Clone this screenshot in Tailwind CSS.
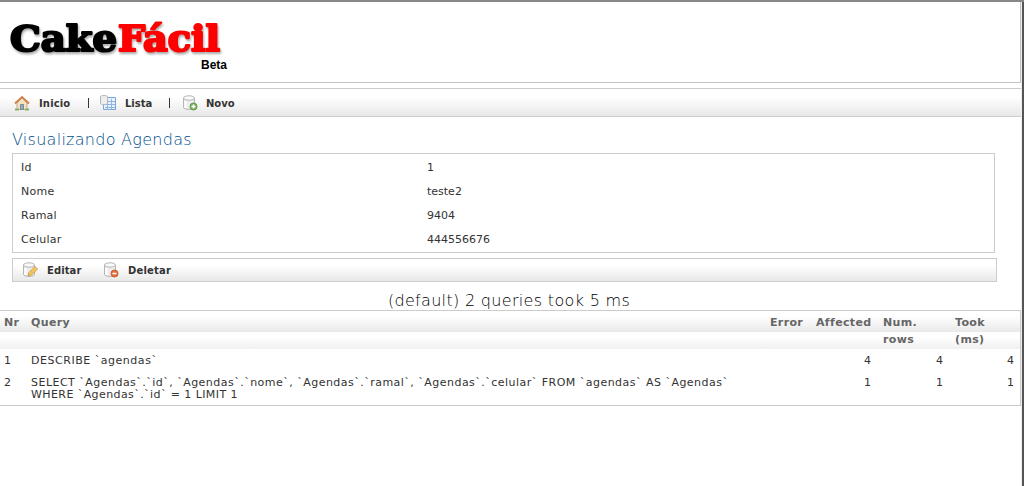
<!DOCTYPE html>
<html lang="pt-br">
<head>
    <meta charset="utf-8">
    <title>CakeFácil</title>
    <script src="https://cdn.jsdelivr.net/npm/@tailwindcss/browser@4"></script>
</head>
<body class="h-[486px] overflow-hidden bg-white font-['DejaVu_Sans',sans-serif] text-[11px] leading-3 text-[#333]">
    <svg class="hidden">
        <symbol id="db" viewBox="0 0 16 16">
            <path d="M1.500 3v9.500c0 2.500 11 2.500 11 0V3" fill="#ededed" stroke="#b5b5b5" />
            <path d="M3.500 6v7" stroke="#fff" stroke-width="2" />
            <ellipse cx="7" cy="3" rx="5.500" ry="2.200" fill="#fafafa" stroke="#b5b5b5" />
        </symbol>
    </svg>

    <div class="flex h-full border-t-2 border-[#888]">
        <main class="w-[1021px] shrink-0">
            <!-- Header -->
            <header class="h-[81px] border-r border-b border-[#c4c4c4] pl-2">
                <svg class="h-[76px] w-[240px]" viewBox="8 2 240 76">
                    <g font-family="DejaVu Serif" font-weight="bold" font-size="35" stroke-width="2.2" stroke-linejoin="round" class="drop-shadow-[1px_2px_1px_#aaa]">
                        <text x="10" y="51" textLength="107" lengthAdjust="spacingAndGlyphs" stroke="#000">Cake</text>
                        <text x="118" y="51" textLength="102" lengthAdjust="spacingAndGlyphs" fill="#f00" stroke="#f00">Fácil</text>
                    </g>
                    <text x="201" y="69" font-family="Liberation Sans" font-weight="bold" font-size="12">Beta</text>
                </svg>
            </header>

            <!-- Menu -->
            <nav class="mt-[5px] flex h-[29px] items-center border-y border-[#ccc] bg-linear-to-b from-white from-30% to-[#e8e8e8] pl-[14px] text-[10px] font-bold">
                <svg class="mr-[9px] size-4" viewBox="0 0 16 16">
                    <path d="M3 8v6.500h10V8L8 3z" fill="#f5e3bd" stroke="#c5a98c" />
                    <path d="M1 8.500 8 2l7 6.500" fill="none" stroke="#cc8550" stroke-width="2" />
                    <path d="M6.500 9.500h3v5h-3z" fill="#9ab" stroke="#789" />
                    <path d="M1 14.500h4M11 14.500h4" stroke="#7fb565" stroke-width="2" />
                </svg>
                <span class="w-[49px] pt-0.5 tracking-[.15px]">Inicio</span>
                <span class="mr-[11px] h-[10px] w-px bg-[#333]"></span>
                <svg class="mr-[9px] size-4" viewBox="0 0 16 16">
                    <path d="M3.500 2.500h12v12h-12z" fill="#e8f2ff" stroke="#7aa5d8" />
                    <path d="M5 6.500h10M5 9.500h10M5 12.500h10M7.500 4v11M11.500 4v11" stroke="#8db4e2" />
                    <path d="M.5 1.500v7c0 1.500 7 1.500 7 0v-7c0-1.300-7-1.300-7 0z" fill="#eee" stroke="#b5b5b5" />
                </svg>
                <span class="w-[44px] pt-0.5">Lista</span>
                <span class="mr-[12px] h-[10px] w-px bg-[#333]"></span>
                <svg class="mr-[8px] size-4" viewBox="0 0 16 16">
                    <use href="#db" />
                    <circle cx="11.500" cy="11.500" r="3.500" fill="#7cb25c" stroke="#5c9848" />
                    <path d="M9.500 11.500h4M11.500 9.500v4" stroke="#fff" stroke-width="1.500" />
                </svg>
                <span class="pt-0.5">Novo</span>
            </nav>

            <!-- Record -->
            <h1 class="mt-[13px] ml-3 text-[16px] leading-5 font-extralight tracking-[.27px] text-[#004d8c]">Visualizando Agendas</h1>
            <dl class="mt-[3px] ml-3 grid h-[100px] w-[983px] grid-cols-[406px_1fr] content-start gap-y-3 border border-[#ccc] px-2 pt-2">
                <dt class="tracking-[.25px]">Id</dt><dd>1</dd>
                <dt class="tracking-[.25px]">Nome</dt><dd>teste2</dd>
                <dt class="tracking-[.25px]">Ramal</dt><dd>9404</dd>
                <dt class="tracking-[.25px]">Celular</dt><dd>444556676</dd>
            </dl>
            <div class="mt-[5px] ml-3 flex h-6 w-[985px] items-center border border-[#ccc] bg-linear-to-b from-white from-30% to-[#e8e8e8] pl-[9px] text-[10px] font-bold">
                <svg class="mr-[9px] size-4" viewBox="0 0 16 16">
                    <use href="#db" />
                    <path d="m6 14 1-3.500 6-6 2.500 2.500-6 6z" fill="#f3c65f" stroke="#d29d45" />
                </svg>
                <span class="w-[56px] pt-0.5 tracking-[.1px]">Editar</span>
                <svg class="mr-[9px] size-4" viewBox="0 0 16 16">
                    <use href="#db" />
                    <circle cx="11.500" cy="11.500" r="3.500" fill="#e0703a" stroke="#c8602f" />
                    <path d="M9.500 11.500h4" stroke="#fff" stroke-width="1.500" />
                </svg>
                <span class="pt-0.5 tracking-[.2px]">Deletar</span>
            </div>

            <!-- SQL log -->
            <div class="mt-[9px] h-[19px] pr-[3px] text-center text-[16px] leading-5 font-extralight tracking-[.32px] text-black">(default) 2 queries took 5 ms</div>
            <section class="h-[96px] border-y border-r border-[#ccc]">
                <div class="grid h-[38px] grid-cols-[27px_739px_46px_67px_72px_1fr] bg-[linear-gradient(#fff_0,#fff_5px,#e9e9e9_21px,#fff_21px,#fff_26px,#f0f0f0_38px)] pt-[3px] pl-1 font-bold leading-[17px] tracking-[.35px] text-[#666]">
                    <span>Nr</span><span>Query</span><span>Error</span><span>Affected</span><span>Num.<br>rows</span><span>Took<br>(ms)</span>
                </div>
                <div class="grid grid-cols-[27px_739px_101px_72px_71px] gap-y-[10px] pt-[6px] pl-1">
                    <span>1</span><span class="tracking-[.53px]">DESCRIBE `agendas`</span><span class="text-right">4</span><span class="text-right">4</span><span class="text-right">4</span>
                    <span>2</span><span class="tracking-[.48px]">SELECT `Agendas`.`id`, `Agendas`.`nome`, `Agendas`.`ramal`, `Agendas`.`celular` FROM `agendas` AS `Agendas`<br><span class="tracking-[.42px]">WHERE `Agendas`.`id` = 1 LIMIT 1</span></span><span class="text-right">1</span><span class="text-right">1</span><span class="text-right">1</span>
                </div>
            </section>
        </main>
        <div class="grow border-r-2 border-[#555] bg-[#eee]"></div>
    </div>
</body>
</html>
